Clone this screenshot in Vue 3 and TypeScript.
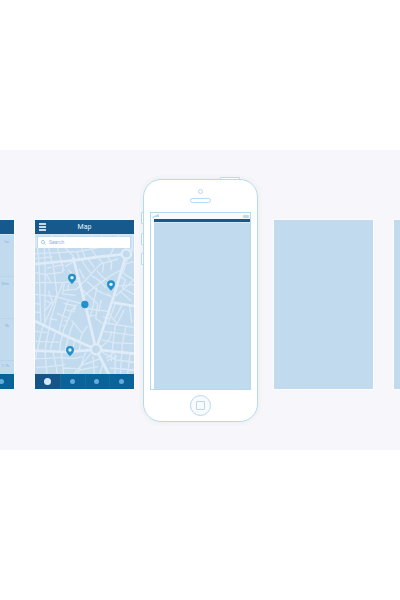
<script setup lang="ts">
import { ref } from 'vue'

interface Pin { x: number; y: number }

const query = ref('')
const activeTab = ref(0)
const tabs: string[] = ['Map', 'Activity', 'Places', 'Profile']
const ticks: string[] = ['1w', '30m', '9k', '1.7k']
const pins: Pin[] = [
  { x: 215, y: 417 },
  { x: 332, y: 437 },
  { x: 209, y: 634 },
]
const avenues =
  'M104 372L220 361L300 350L378 342M218 352L255 494L287 628L326 704M378 342L340 470L287 628M104 543L190 585L287 628M104 632L200 636L287 629L401 641M340 488L401 498'
const streets =
  'M132 324L135 408L133 545M104 341L175 338L230 335L291 324M165 302L183 365L191 392M104 398L133 403L185 397L190 385M104 428L185 428L235 424M158 370L166 432L170 465L125 568L104 660M187 428L170 472L150 545L134 628M104 463L165 469L246 492M116 370L121 545M204 480L190 520L174 582M190 490L226 498L220 516L191 508M170 520L206 535L214 510L228 494M206 535L190 570L181 606L178 632M214 542L246 580L261 558M218 550L205 590M246 580L238 604M226 450L265 410L300 372L353 357M246 472L291 434L332 406L360 391M238 442L260 462L292 492M259 424L292 452L326 468M274 407L300 424L317 444M289 391L303 408L320 420M296 356L310 372L306 398M322 351L334 368L332 391M270 322L290 353M244 360L260 386L275 402M264 358L282 382M236 386L252 416M195 379L217 367M204 390L232 418M258 505L292 510L326 514M290 442L275 510L268 534M292 492L286 535L306 550M262 529L284 526M303 480L295 515M346 468L401 419M357 452L392 482M366 444L401 463M330 440L401 434M345 489L324 548M366 493L344 534M388 497L394 548M324 518L350 552L372 508M316 549L401 562M310 574L401 586M304 599L340 608L401 611M345 555L338 610L333 664M377 558L366 612L360 704M335 574L326 599L303 622M305 636L346 660L401 666M318 655L340 638M328 684L401 690M320 662L350 650M345 642L344 704M389 640L382 704M271 641L244 674L220 704M256 635L232 704M278 648L282 704M300 656L260 670L244 676M293 680L238 690M308 670L298 704M104 574L140 578M104 604L178 607M165 577L150 628M204 594L195 630M222 603L218 632M240 610L237 632M134 633L140 704M158 635L172 704M183 637L190 704M104 656L140 655L185 652M108 682L145 680L195 674M178 652L220 656L246 650M190 684L230 686M140 384L190 374M140 404L152 430M144 452L156 486L134 512M104 490L121 494M135 482L160 493M104 516L121 518M146 535L170 540M230 336L238 360M145 324L155 366M104 356L156 350M112 324L116 370M182 337L218 334M190 318L220 350M244 324L255 355M340 324L328 350M380 360L368 400L401 420M370 374L401 365M357 405L375 421L366 444M389 324L401 336M334 472L322 460M307 530L326 535M188 452L224 448M192 430L186 462L226 466M205 432L202 450M192 540L202 544M187 556L196 560'
const edgeBlocks =
  'M104 285H401M155 283V292M194 283V292M276 283V292M304 283V292M354 283V292M396 284V330M107 290V324'
</script>

<template>
  <main class="page">
    <section class="stage" aria-label="App screens">
      <article class="card strip-left">
        <header class="bar"></header>
        <div class="ticks">
          <span v-for="tick in ticks" :key="tick" class="tick">{{ tick }}</span>
        </div>
        <footer class="strip-foot"><i class="dot"></i></footer>
      </article>

      <article class="card map-card">
        <header class="bar map-bar">
          <button class="menu" type="button" aria-label="Menu">
            <svg viewBox="0 0 7 8"><path d="M0 1h7M0 4h7M0 7h7" /></svg>
          </button>
          <h1 class="title">Map</h1>
        </header>
        <div class="map">
          <svg class="roads" viewBox="104 282 297 420" preserveAspectRatio="none" aria-hidden="true">
            <path class="edge" :d="edgeBlocks" />
            <path class="street" :d="streets" />
            <path class="avenue" :d="avenues" />
            <circle class="round" cx="378" cy="342" r="14" />
            <circle class="round" cx="287" cy="628" r="15" />
            <circle class="here" cx="253.500" cy="493.500" r="11" />
            <g v-for="(pin, i) in pins" :key="i" :transform="`translate(${pin.x} ${pin.y})`">
              <path class="pin" d="M0 15C-4 10-12 4-12-4A12 12 0 0 1 12-4C12 4 4 10 0 15Z" />
              <circle class="hole" cx="0" cy="-4" r="5" />
            </g>
          </svg>
          <label class="search">
            <svg viewBox="0 0 14 14" aria-hidden="true">
              <circle cx="5.500" cy="5.500" r="4.500" />
              <path d="M9 9L13.500 13.500" />
            </svg>
            <input v-model="query" type="text" placeholder="Search" aria-label="Search" />
          </label>
        </div>
        <nav class="tabs">
          <button
            v-for="(tab, i) in tabs"
            :key="tab"
            type="button"
            class="tab"
            :class="{ active: activeTab === i }"
            :aria-label="tab"
            @click="activeTab = i"
          >
            <i class="dot"></i>
          </button>
        </nav>
      </article>

      <div class="phone">
        <i class="key power"></i>
        <i class="key side mute"></i>
        <i class="key side up"></i>
        <i class="key side down"></i>
        <div class="face">
          <div class="top">
            <i class="camera"></i>
            <i class="speaker"></i>
          </div>
          <div class="screen">
            <div class="status">
              <svg class="signal" viewBox="0 0 8 4"><path d="M0 4L1 2.500L7 0V3H3L1 4Z" /></svg>
              <i class="battery"></i>
            </div>
            <div class="view"></div>
          </div>
          <div class="bottom">
            <button class="home" type="button" aria-label="Home"><i></i></button>
          </div>
        </div>
      </div>

      <article class="card blank"></article>
      <article class="card strip-right"></article>
    </section>
  </main>
</template>

<style>
body {
  margin: 0;
  background: #fff;
}
</style>

<style scoped>
* {
  box-sizing: border-box;
}
.page {
  min-height: 100vh;
  display: flex;
  flex-direction: column;
  justify-content: center;
  font-family: Roboto, "Liberation Sans", sans-serif;
}
.stage {
  display: flex;
  align-items: flex-start;
  padding: 29px 0 28px;
  background: #f6f6fb;
  overflow: hidden;
}
button {
  margin: 0;
  padding: 0;
  border: 0;
  background: none;
}
.card {
  display: flex;
  flex-direction: column;
  flex: 0 0 99px;
  height: 169px;
  margin-top: 41px;
  background: #c2daee;
  box-shadow: 0 0 0 1px #fbfcfe;
}
.strip-left {
  flex: 1 1 14px;
  min-width: 0;
  margin-right: 21px;
}
.strip-right {
  flex: 1 1 6px;
  min-width: 0;
  margin-left: 21px;
}
.bar {
  height: 14px;
  flex: none;
  background: #165a8d;
}
.map-bar {
  display: grid;
  grid-template-columns: 14px 1fr 14px;
  align-items: center;
}
.menu {
  display: flex;
  justify-content: center;
}
.menu svg {
  width: 7px;
  height: 8px;
  flex: none;
  stroke: #c4dcec;
  stroke-width: 2;
}
.title {
  margin: 0;
  text-align: center;
  font-size: 7px;
  line-height: 14px;
  font-weight: 400;
  color: #e4f1fa;
}
.map {
  flex: 1;
  min-height: 0;
  display: grid;
}
.roads,
.search {
  grid-area: 1 / 1;
}
.roads {
  width: 100%;
  height: 140px;
  fill: none;
}
.street {
  stroke: #dbe9f6;
  stroke-width: 4;
}
.edge {
  stroke: #dbe9f6;
  stroke-width: 5;
}
.avenue {
  stroke: #e0edf8;
  stroke-width: 8;
}
.round {
  fill: #c2daee;
  stroke: #e0edf8;
  stroke-width: 7;
}
.here,
.pin {
  fill: #2290ca;
}
.hole {
  fill: #e6f2fa;
}
.search {
  align-self: start;
  display: flex;
  align-items: center;
  gap: 3px;
  height: 11px;
  margin: 3px 4px 0 3px;
  padding-left: 3px;
  background: #fff;
  border-radius: 1px;
}
.search svg {
  width: 5px;
  height: 5px;
  flex: none;
  fill: none;
  stroke: #86bce0;
  stroke-width: 2;
}
.search input {
  flex: 1;
  min-width: 0;
  height: 11px;
  padding: 0;
  border: 0;
  outline: 0;
  background: none;
  font: 5px/11px Roboto, "Liberation Sans", sans-serif;
  color: #5fa5d3;
}
.search input::placeholder {
  color: #7fb8de;
  opacity: 1;
}
.tabs {
  display: flex;
  height: 15px;
  flex: none;
  background: #096399;
}
.tab {
  flex: 1;
  display: flex;
  align-items: center;
  justify-content: center;
}
.tab + .tab {
  box-shadow: inset 1px 0 #136a9f;
}
.tab.active {
  background: #165487;
}
.dot {
  flex: none;
  width: 5px;
  height: 5px;
  border-radius: 50%;
  background: #64addb;
}
.tab.active .dot {
  width: 7px;
  height: 7px;
  background: #d7e9f7;
}
.ticks {
  flex: 1;
  display: flex;
  flex-direction: column;
}
.tick {
  flex: 0 0 42px;
  padding: 3px 5px 0 0;
  border-top: 1px solid #b7d4ea;
  text-align: right;
  font-size: 4px;
  line-height: 8px;
  color: #82b6da;
}
.tick:first-child {
  border-top-color: #d5e6f4;
}
.tick:last-child {
  flex: 0 0 14px;
  padding-top: 1px;
}
.strip-foot {
  display: flex;
  justify-content: flex-end;
  align-items: center;
  height: 15px;
  flex: none;
  padding-right: 10px;
  background: #096399;
}
.phone {
  position: relative;
  flex: 0 0 115px;
  margin: 0 16px 0 9px;
  border-radius: 18px;
  box-shadow: 0 0 4px 1px #efefee;
}
.face {
  position: relative;
  display: flex;
  flex-direction: column;
  height: 243px;
  padding: 0 6px;
  border: 1px solid #b5d9ef;
  border-radius: 18px;
  background: #fff;
}
.key {
  position: absolute;
  border: 1px solid #b5d9ef;
  background: #fff;
}
.power {
  top: -2px;
  right: 18px;
  width: 20px;
  height: 4px;
  border-radius: 1px;
}
.side {
  left: -2px;
  width: 4px;
  height: 12px;
  border-radius: 1px;
}
.mute {
  top: 33px;
}
.up {
  top: 54px;
}
.down {
  top: 74px;
}
.top {
  display: flex;
  flex-direction: column;
  align-items: center;
  gap: 4px;
  height: 32px;
  padding-top: 9px;
}
.camera {
  width: 5px;
  height: 5px;
  border: 1px solid #b5d9ef;
  border-radius: 50%;
}
.speaker {
  width: 21px;
  height: 5px;
  border: 1px solid #b5d9ef;
  border-radius: 3px;
}
.screen {
  display: flex;
  flex-direction: column;
  height: 178px;
  border: 1px solid #b5d9ef;
}
.status {
  display: flex;
  justify-content: space-between;
  align-items: center;
  height: 6px;
  padding: 0 1px;
  background: #fafafd;
}
.signal {
  width: 8px;
  height: 4px;
  fill: #b5d9ef;
}
.battery {
  width: 6px;
  height: 3px;
  border-radius: 1px;
  background: #bbdaef;
}
.view {
  flex: 1;
  margin-left: 3px;
  background: linear-gradient(#165a8d 0 3px, #d5e8f5 3px 4px, #c2daee 4px);
}
.bottom {
  flex: 1;
  display: flex;
  align-items: center;
  justify-content: center;
}
.home {
  display: flex;
  align-items: center;
  justify-content: center;
  width: 21px;
  height: 21px;
  border: 1px solid #b5d9ef;
  border-radius: 50%;
  background: #fafafd;
}
.home i {
  width: 9px;
  height: 9px;
  border: 1px solid #b5d9ef;
  border-radius: 1px;
}
</style>
